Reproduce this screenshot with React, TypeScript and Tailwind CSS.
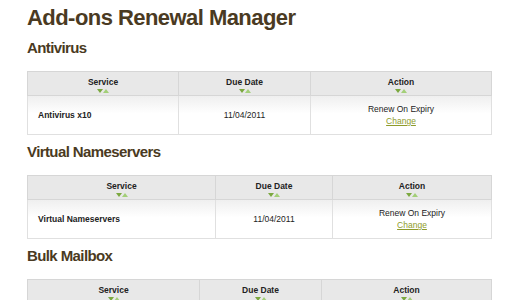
import React from 'react';

type Row = { service: string; due: string };
type Section = { title: string; cols: [number, number, number]; row?: Row };

const sections: Section[] = [
  { title: 'Antivirus', cols: [151, 132, 181], row: { service: 'Antivirus x10', due: '11/04/2011' } },
  { title: 'Virtual Nameservers', cols: [188, 117, 159], row: { service: 'Virtual Nameservers', due: '11/04/2011' } },
  { title: 'Bulk Mailbox', cols: [172, 122, 170] },
];

function SortArrows() {
  return (
    <svg width="12" height="5" viewBox="0 0 12 5" className="mx-auto mt-[2px] block">
      <polygon points="0,0 6,0 3,4" fill="#7ba83f" />
      <polygon points="6,4 12,4 9,0" fill="#a3cf78" />
    </svg>
  );
}

function RenewTable({ cols, row }: { cols: [number, number, number]; row?: Row }) {
  const heads = ['Service', 'Due Date', 'Action'];
  return (
    <table className="w-[464px] border-collapse table-fixed">
      <colgroup>
        {cols.map((w, i) => (
          <col key={i} style={{ width: w }} />
        ))}
      </colgroup>
      <thead>
        <tr className="h-[24px] bg-[#e8e8e8]">
          {heads.map((h) => (
            <th key={h} className="border border-[#d6d6d6] pt-[5px] align-top text-[8.5px] font-bold leading-[10px] text-[#222]">
              {h}
              <SortArrows />
            </th>
          ))}
        </tr>
      </thead>
      {row && (
        <tbody>
          <tr className="h-[39px] bg-gradient-to-b from-[#efefef] to-white to-[45%]">
            <td className="border border-[#e0e0e0] pl-[10px] text-[8.5px] font-bold text-[#222]">{row.service}</td>
            <td className="border border-[#e0e0e0] text-center text-[8.5px] text-[#222]">{row.due}</td>
            <td className="border border-[#e0e0e0] text-center text-[8.5px] leading-[12px] text-[#222]">
              <div>Renew On Expiry</div>
              <a href="#" className="text-[#8e9b2b] underline">Change</a>
            </td>
          </tr>
        </tbody>
      )}
    </table>
  );
}

export default function App() {
  return (
    <div className="h-[300px] w-[513px] overflow-hidden bg-white pl-[27px] pt-[5px] font-['Liberation_Sans',Arial,sans-serif]">
      <h1 className="text-[22px] font-bold leading-[26px] tracking-[-0.55px] text-[#4a3a22]">
        Add-ons Renewal Manager
      </h1>
      {sections.map((s) => (
        <div key={s.title}>
          <h2 className="mt-[8px] mb-[14px] text-[15px] font-bold leading-[18px] tracking-[-0.6px] text-[#4a3a22]">
            {s.title}
          </h2>
          <RenewTable cols={s.cols} row={s.row} />
        </div>
      ))}
    </div>
  );
}
